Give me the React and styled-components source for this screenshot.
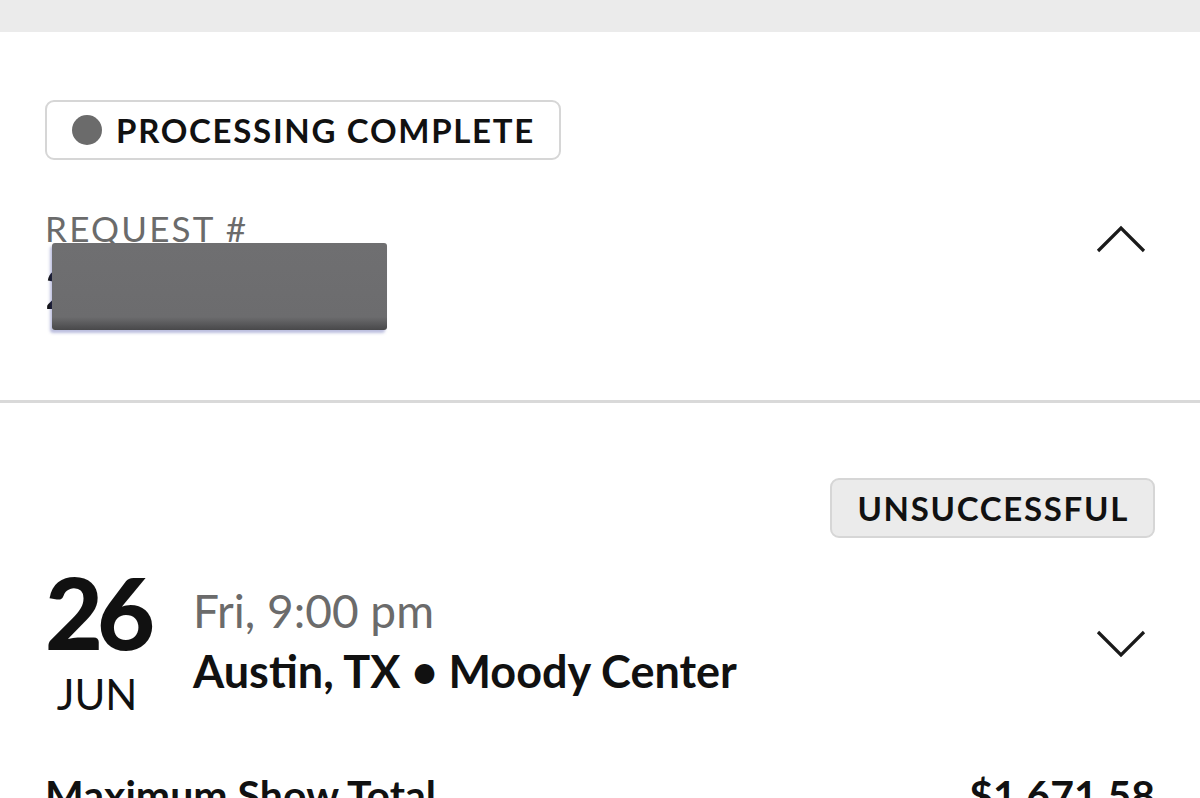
import React from 'react';
import styled, {createGlobalStyle} from 'styled-components';

const GlobalStyle = createGlobalStyle`
  html, body {
    margin: 0;
    padding: 0;
    background: #fff;
    font-family: Lato, 'Open Sans', sans-serif;
    color: #121212;
    overflow: hidden;
  }
`;

const Page = styled.div`
  width: 1200px;
  height: 798px;
  overflow: hidden;
  display: flex;
  flex-flow: column nowrap;
`;

const TopBar = styled.div`
  height: 32px;
  flex: none;
  background: #ebebeb;
`;

const RequestSection = styled.section`
  height: 371px;
  flex: none;
  box-sizing: border-box;
  padding: 68px 54px 0 45px;
  display: flex;
  flex-flow: column nowrap;
  border-bottom: 3px solid #d9d9d9;
`;

const Badge = styled.div`
  display: inline-flex;
  align-self: ${props => (props.right ? 'flex-end' : 'flex-start')};
  align-items: center;
  gap: 14px;
  height: 60px;
  box-sizing: border-box;
  padding: 0 24px 0 25px;
  border: 2px solid #d6d6d6;
  border-radius: 9px;
  background: ${props => (props.muted ? '#ebebeb' : '#fff')};
  font-size: 33px;
  font-weight: 700;
  letter-spacing: 1.7px;
  color: #111;
`;

const Dot = styled.span`
  width: 30px;
  height: 30px;
  border-radius: 50%;
  background: #6b6b6b;
`;

const RequestRow = styled.div`
  margin-top: 52px;
  display: flex;
  justify-content: space-between;
  align-items: flex-start;
`;

const RequestInfo = styled.div`
  display: flex;
  flex-flow: column nowrap;
`;

const Label = styled.div`
  font-size: 35px;
  line-height: 32px;
  letter-spacing: 2.2px;
  color: #6b6b6b;
`;

const NumberWrap = styled.div`
  position: relative;
  height: 88px;
  font-size: 56px;
  font-weight: 700;
  line-height: 88px;
  color: #111;
`;

const Redaction = styled.div`
  position: absolute;
  left: 7px;
  top: -1px;
  width: 335px;
  height: 87px;
  border-radius: 3px;
  background: linear-gradient(180deg, #6f6f71 0%, #6c6c6e 85%, #48484a 100%);
  box-shadow: -2px 3px 3px rgba(60, 70, 160, 0.35);
`;

const ChevronBox = styled.div`
  width: 50px;
  height: 30px;
  margin-top: ${props => props.offset || 0}px;
  display: flex;
  align-items: center;
  justify-content: center;
`;

const EventSection = styled.section`
  padding: 75px 45px 0 45px;
  display: flex;
  flex-flow: column nowrap;
`;

const EventRow = styled.div`
  margin-top: 23px;
  display: flex;
  align-items: flex-start;
  padding-right: 9px;
`;

const DateCol = styled.div`
  width: 104px;
  display: flex;
  flex-flow: column nowrap;
  align-items: center;
`;

const Day = styled.div`
  font-size: 100px;
  font-weight: 900;
  line-height: 100px;
  letter-spacing: -6px;
  color: #111;
`;

const Month = styled.div`
  margin-top: 11px;
  font-size: 42px;
  line-height: 44px;
  color: #111;
`;

const Details = styled.div`
  flex: 1;
  margin-left: 44px;
  padding-top: 24px;
`;

const Time = styled.div`
  font-size: 46px;
  line-height: 52px;
  color: #6b6b6b;
`;

const Venue = styled.div`
  margin-top: 8px;
  font-size: 45px;
  font-weight: 700;
  line-height: 52px;
  color: #111;
`;

const TotalRow = styled.div`
  margin-top: 54px;
  display: flex;
  justify-content: space-between;
  font-size: 41px;
  font-weight: 700;
  line-height: 50px;
  color: #111;
`;

const Chevron = ({up}) => (
  <svg width='50' height='30' viewBox='0 0 50 30' fill='none'>
    <path
      d={up ? 'M2 27 L25 4 L48 27' : 'M2 3 L25 26 L48 3'}
      stroke='#1a1a1a'
      strokeWidth='3.2'
    />
  </svg>
);

export default () => (
  <Page>
    <GlobalStyle />
    <TopBar />
    <RequestSection>
      <Badge>
        <Dot />
        PROCESSING COMPLETE
      </Badge>
      <RequestRow>
        <RequestInfo>
          <Label>REQUEST #</Label>
          <NumberWrap>
            2
            <Redaction />
          </NumberWrap>
        </RequestInfo>
        <ChevronBox offset={12}>
          <Chevron up />
        </ChevronBox>
      </RequestRow>
    </RequestSection>
    <EventSection>
      <Badge right muted>
        UNSUCCESSFUL
      </Badge>
      <EventRow>
        <DateCol>
          <Day>26</Day>
          <Month>JUN</Month>
        </DateCol>
        <Details>
          <Time>Fri, 9:00 pm</Time>
          <Venue>Austin, TX • Moody Center</Venue>
        </Details>
        <ChevronBox offset={68}>
          <Chevron />
        </ChevronBox>
      </EventRow>
      <TotalRow>
        <span>Maximum Show Total</span>
        <span>$1,671.58</span>
      </TotalRow>
    </EventSection>
  </Page>
);
